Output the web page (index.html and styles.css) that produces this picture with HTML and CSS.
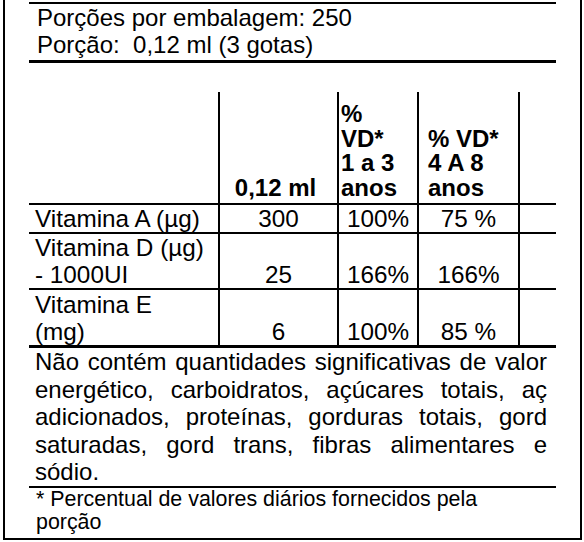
FILE: index.html
```html
<!DOCTYPE html>
<html lang="pt">
<head>
<meta charset="utf-8">
<title>Informação nutricional</title>
<link rel="stylesheet" href="styles.css">
</head>
<body>
<div class="frame">
  <div class="label">
    <div class="serving">
      <div>Porções por embalagem: 250</div>
      <div>Porção:&nbsp; 0,12 ml (3 gotas)</div>
    </div>
    <div class="grid">
      <div class="cell head first"></div>
      <div class="cell head center">0,12 ml</div>
      <div class="cell head narrow">%<br>VD*<br>1 a 3<br>anos</div>
      <div class="cell head wide">% VD*<br>4 A 8<br>anos</div>
      <div class="cell head"></div>

      <div class="cell row-a first name">Vitamina A (µg)</div>
      <div class="cell row-a center">300</div>
      <div class="cell row-a center">100%</div>
      <div class="cell row-a center">75 %</div>
      <div class="cell row-a"></div>

      <div class="cell row-d first name">Vitamina D (µg)<br>- 1000UI</div>
      <div class="cell row-d center">25</div>
      <div class="cell row-d center">166%</div>
      <div class="cell row-d center">166%</div>
      <div class="cell row-d"></div>

      <div class="cell row-e first name">Vitamina E<br>(mg)</div>
      <div class="cell row-e center">6</div>
      <div class="cell row-e center">100%</div>
      <div class="cell row-e center">85 %</div>
      <div class="cell row-e"></div>
    </div>
    <div class="note">
      <span class="jl">Não contém quantidades significativas de valor</span>
      <span class="jl">energético, carboidratos, açúcares totais, aç</span>
      <span class="jl">adicionados, proteínas, gorduras totais, gord</span>
      <span class="jl">saturadas, gord trans, fibras alimentares e</span>
      <span class="ll">sódio.</span>
    </div>
    <div class="foot">* Percentual de valores diários fornecidos pela<br>porção</div>
  </div>
</div>
</body>
</html>
```
FILE: styles.css
```css
html, body {
  margin: 0;
  padding: 0;
  background: #fff;
}
body {
  font-family: "Liberation Sans", Arial, sans-serif;
  color: #000;
}
.frame {
  box-sizing: border-box;
  margin-left: 3px;
  width: 579px;
  height: 540px;
  border-left: 2px solid #000;
  border-right: 2px solid #000;
  border-bottom: 2px solid #000;
  padding-top: 2px;
}
.label {
  margin-left: 24px;
  width: 527px;
}
.serving {
  border-top: 2px solid #000;
  border-bottom: 3px solid #000;
  height: 56px;
  padding-left: 8px;
  font-size: 24px;
  line-height: 27px;
  white-space: nowrap;
}
.grid {
  margin-top: 29px;
  display: grid;
  grid-template-columns: 189px 119px 80px 101px 38px;
  grid-template-rows: 113px 29px 56px 58px;
}
.cell {
  box-sizing: border-box;
  border-left: 2px solid #000;
  border-bottom: 2px solid #000;
  font-size: 24.3px;
  line-height: 27px;
  display: flex;
  flex-direction: column;
  justify-content: flex-end;
}
.cell.first {
  border-left: none;
}
.cell.head {
  font-weight: bold;
  font-size: 24px;
  line-height: 24.5px;
  padding-bottom: 3px;
}
.cell.head.center {
  text-align: center;
  padding-right: 6px;
}
.cell.narrow {
  padding-left: 2px;
}
.cell.wide {
  padding-left: 9px;
}
.cell.name {
  padding-left: 6px;
}
.cell.center {
  text-align: center;
}
.cell.row-e {
  border-bottom-width: 3px;
}
.note {
  font-size: 24px;
  line-height: 27.6px;
  padding: 0 9px 0 6px;
  border-bottom: 2px solid #000;
}
.jl {
  display: block;
  text-align: justify;
  text-align-last: justify;
}
.ll {
  display: block;
}
.foot {
  font-size: 21.4px;
  line-height: 23px;
  padding-left: 7px;
}
```
